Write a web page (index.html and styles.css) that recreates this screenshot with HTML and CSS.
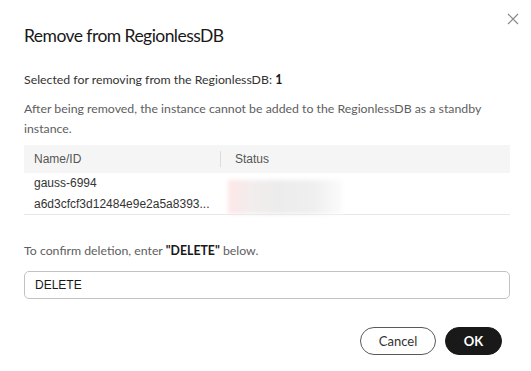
FILE: index.html
```html
<!DOCTYPE html>
<html lang="en">
<head>
    <meta charset="UTF-8">
    <meta name="viewport" content="width=device-width, initial-scale=1.0">
    <title>Remove from RegionlessDB</title>
    <link rel="stylesheet" href="styles.css">
</head>
<body>
    <div class="dialog">
        <button class="close-btn" aria-label="Close">
            <svg width="12" height="12" viewBox="0 0 12 12"><path d="M1 1L11 11M11 1L1 11" stroke="#8a8a8a" stroke-width="1.2" fill="none"/></svg>
        </button>
        <h2 class="dialog-title">Remove from RegionlessDB</h2>

        <div class="dialog-body">
            <p class="selected-line">Selected for removing from the RegionlessDB: <b>1</b></p>
            <p class="notice">After being removed, the instance cannot be added to the RegionlessDB as a standby instance.</p>

            <div class="table">
                <div class="table-head">
                    <div class="col-name">Name/ID</div>
                    <div class="col-status">Status</div>
                </div>
                <div class="table-row">
                    <div class="col-name">
                        <div>gauss-6994</div>
                        <div class="row-id">a6d3cfcf3d12484e9e2a5a8393...</div>
                    </div>
                    <div class="col-status">
                        <div class="status-blur"></div>
                    </div>
                </div>
            </div>

            <p class="confirm-line">To confirm deletion, enter <b>"DELETE"</b> below.</p>
            <input class="confirm-input" type="text" value="DELETE">
        </div>

        <div class="dialog-footer">
            <button class="btn btn-cancel">Cancel</button>
            <button class="btn btn-ok">OK</button>
        </div>
    </div>
</body>
</html>
```

FILE: styles.css
```css
* {
    margin: 0;
    padding: 0;
    box-sizing: border-box;
}

body {
    font-family: Lato, 'Noto Sans', sans-serif;
    background: #fff;
    color: #252b3a;
    width: 531px;
    height: 371px;
    overflow: hidden;
}

.dialog {
    position: relative;
    padding: 24px 21px 0 24px;
}

.close-btn {
    position: absolute;
    top: 13px;
    right: 12px;
    width: 12px;
    height: 12px;
    border: none;
    background: none;
    display: flex;
}

.dialog-title {
    font-size: 17.5px;
    font-weight: 400;
    letter-spacing: -0.55px;
    color: #191919;
    line-height: 24px;
}

.dialog-body {
    margin-top: 22px;
    font-size: 12.3px;
    color: #4d4d4d;
}

.selected-line {
    line-height: 20px;
    color: #333;
}

.selected-line b {
    font-weight: 700;
    color: #191919;
}

.notice {
    margin-top: 9px;
    line-height: 20px;
    color: #5e5e5e;
}

.table {
    margin-top: 6px;
    font-family: 'Liberation Sans', Arial, sans-serif;
    font-size: 12px;
}

.table-head {
    display: flex;
    align-items: center;
    height: 28px;
    background: #f5f5f5;
    color: #555;
}

.table-head .col-status {
    border-left: 1px solid #dcdcdc;
    height: 16px;
    line-height: 16px;
}

.col-name {
    width: 196px;
    padding-left: 10px;
}

.col-status {
    flex: 1;
    padding-left: 14px;
}

.table-row {
    display: flex;
    align-items: center;
    height: 42px;
    border-bottom: 1px solid #e8e8e8;
    color: #333;
    line-height: 21px;
}

.table-row .col-name {
    padding-top: 1px;
}

.table-row .col-status {
    padding-left: 8px;
    align-self: stretch;
    padding-top: 7px;
}

.status-blur {
    width: 114px;
    height: 34px;
    background: linear-gradient(90deg, #fde6e6 0%, #f3eded 20%, #ececec 45%, #efefef 75%, #fbfbfb 100%);
    filter: blur(2px);
}

.confirm-line {
    margin-top: 26px;
    line-height: 20px;
    color: #5e5e5e;
}

.confirm-line b {
    color: #191919;
}

.confirm-input {
    display: block;
    margin-top: 10px;
    width: 486px;
    height: 28px;
    border: 1px solid #c2c2c2;
    border-radius: 5px;
    padding: 0 10px;
    font-family: 'Liberation Sans', Arial, sans-serif;
    font-size: 12px;
    color: #191919;
    outline: none;
}

.dialog-footer {
    display: flex;
    justify-content: flex-end;
    gap: 9px;
    margin-top: 28px;
    padding-right: 8px;
}

.btn {
    height: 28px;
    border-radius: 14px;
    font-family: Lato, 'Noto Sans', sans-serif;
    font-size: 13px;
    cursor: pointer;
}

.btn-cancel {
    width: 76px;
    background: #fff;
    border: 1px solid #595959;
    color: #333;
}

.btn-ok {
    width: 57px;
    background: #191919;
    border: 1px solid #191919;
    color: #fff;
    font-weight: 700;
}
```
